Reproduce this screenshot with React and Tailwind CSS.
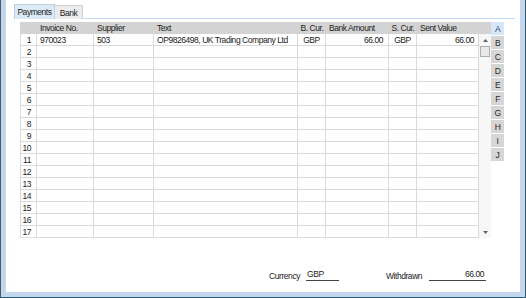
import React from 'react'

const COLS = [
  { key: 'no', title: '', w: 'w-[17px]', align: 'text-right pr-[5px]' },
  { key: 'inv', title: 'Invoice No.', w: 'w-[57px]', align: 'text-left pl-[3px]' },
  { key: 'sup', title: 'Supplier', w: 'w-[60px]', align: 'text-left pl-[3px]' },
  { key: 'text', title: 'Text', w: 'w-[144px]', align: 'text-left pl-[3px]' },
  { key: 'bcur', title: 'B. Cur.', w: 'w-[28px]', align: 'text-center' },
  { key: 'bank', title: 'Bank Amount', w: 'w-[63px]', align: 'text-right pr-[5px]' },
  { key: 'scur', title: 'S. Cur.', w: 'w-[28px]', align: 'text-center' },
  { key: 'sent', title: 'Sent Value', w: 'w-[62px]', align: 'text-right pr-[4px]' },
]

const ROWS = Array.from({ length: 17 }, (_, i) =>
  i === 0
    ? { no: '1', inv: '970023', sup: '503', text: 'OP9826498, UK Trading Company Ltd', bcur: 'GBP', bank: '66.00', scur: 'GBP', sent: '66.00' }
    : { no: String(i + 1) }
)

const LETTERS = ['A', 'B', 'C', 'D', 'E', 'F', 'G', 'H', 'I', 'J']

export default function App() {
  return (
    <div className="w-[526px] h-[298px] border-l border-r border-b border-l-[#4a5866] border-r-[#2e5f73] border-b-[#2e5f73] font-['Liberation_Sans',sans-serif] text-[8.5px] tracking-[-0.45px] leading-none text-[#1b1b1b] overflow-hidden">
      <div className="h-full border-l-[5px] border-r-[5px] border-b-[5px] border-[#c2d7ee] bg-white pl-[8px] pt-[4px] flex flex-col">
        {/* tabs */}
        <div className="flex w-[501px] border-b border-[#c4daf0] h-[15px]">
          <div className="w-[41px] h-[15px] bg-[#dce9f7] border border-b-0 border-[#b8cfe8] flex items-center justify-center pt-[1px]">Payments</div>
          <div className="w-[28px] h-[14px] mt-[1px] bg-[#ececec] border border-l-0 border-b-0 border-[#cfcfcf] flex items-center justify-center pt-[1px]">Bank</div>
        </div>

        <div className="flex ml-[6px] mt-[3px]">
          <div className="w-[471px]">
            {/* header */}
            <div className="flex h-[12px] bg-[#d3d3d3]">
              {COLS.map(c => (
                <div key={c.key} className={`${c.w} shrink-0 h-full flex items-center ${c.key === 'bcur' || c.key === 'scur' ? 'justify-center' : 'pl-[3px]'} pt-[1px] whitespace-nowrap`}>
                  {c.title}
                </div>
              ))}
            </div>
            <div className="flex">
              <div className="w-[459px] border-l border-[#dadada]">
                {ROWS.map((r, i) => (
                  <div key={i} className="flex h-[12px] border-b border-[#dadada]">
                    {COLS.map((c, j) => (
                      <div
                        key={c.key}
                        className={`${j === 0 ? 'w-[16px]' : c.w} shrink-0 h-full border-r border-[#dadada] ${c.align} pt-[2px] whitespace-nowrap overflow-hidden`}
                      >
                        {r[c.key] || ''}
                      </div>
                    ))}
                  </div>
                ))}
              </div>
              {/* scrollbar */}
              <div className="w-[12px] h-[204px] bg-[#f7f7f7] flex flex-col items-center">
                <div className="h-[12px] flex items-center justify-center">
                  <svg width="5" height="3" viewBox="0 0 5 3"><path d="M0 3 L2.5 0 L5 3 Z" fill="#606060" /></svg>
                </div>
                <div className="w-[10px] h-[11px] bg-[#e9e9e9] border border-[#adadad]" />
                <div className="flex-1" />
                <div className="h-[12px] flex items-center justify-center">
                  <svg width="5" height="3" viewBox="0 0 5 3"><path d="M0 0 L2.5 3 L5 0 Z" fill="#606060" /></svg>
                </div>
              </div>
            </div>
          </div>
          {/* letter tabs */}
          <div className="w-[13px] flex flex-col">
            {LETTERS.map((l, i) => (
              <div
                key={l}
                className={`h-[14px] border-b border-white flex items-center justify-center pt-[1px] ${i === 0 ? 'bg-[#d8e7f7] text-[#1a3d6b]' : 'bg-[#d6d6d6] text-[#2a2a2a]'}`}
              >
                {l}
              </div>
            ))}
          </div>
        </div>

        {/* footer fields */}
        <div className="flex items-end mt-[32px] ml-[254px]">
          <div className="w-[32px] text-right">Currency</div>
          <div className="ml-[6px] w-[33px] border-b border-[#444] pl-[1px] pb-[1px]">GBP</div>
          <div className="ml-[47px] w-[40px]">Withdrawn</div>
          <div className="ml-[3px] w-[57px] border-b border-[#444] text-right pr-[2px] pb-[1px]">66.00</div>
        </div>
      </div>
    </div>
  )
}
